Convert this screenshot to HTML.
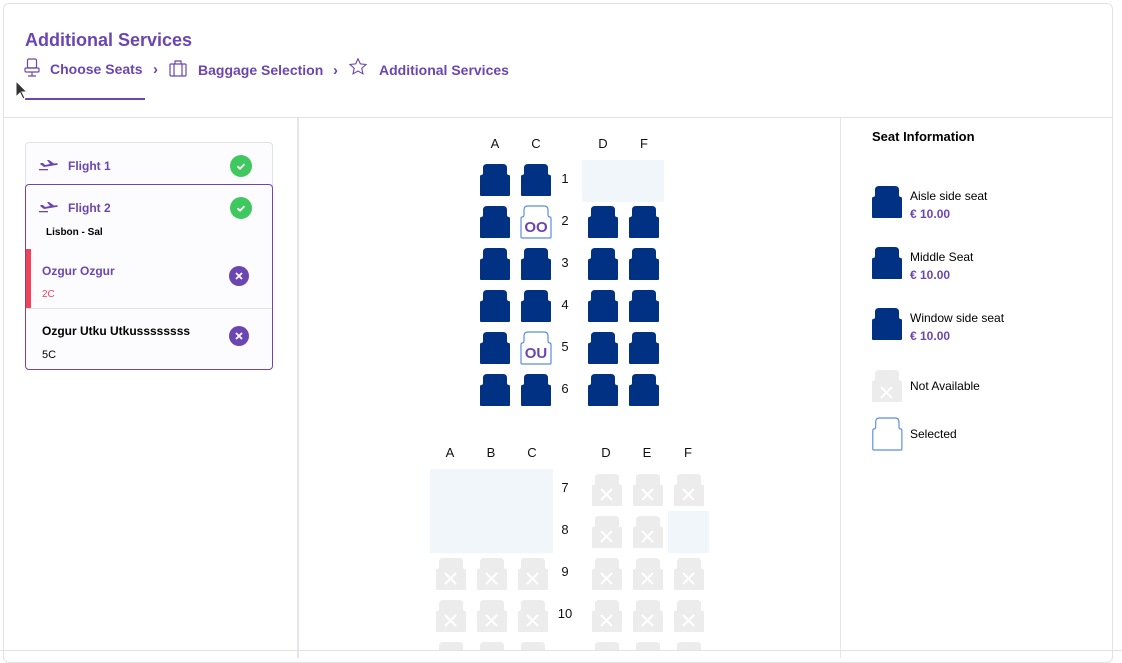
<!DOCTYPE html>
<html><head><meta charset="utf-8"><style>
*{margin:0;padding:0;box-sizing:border-box}
body{width:1122px;height:655px;overflow:hidden;background:#fff;font-family:"Liberation Sans",sans-serif;position:relative}
.card{position:absolute;left:3px;top:3px;width:1110px;height:660px;border:1px solid #dfe3e8;border-radius:6px;background:#fff}
.abs{position:absolute}
.p{color:#6b46b0;font-weight:bold}
</style></head><body>
<div class="card"></div>
<div class="abs p" style="left:25px;top:30px;font-size:18px">Additional Services</div>
<svg class="abs" style="left:24px;top:58px" width="16" height="20" viewBox="0 0 16 20" fill="none" stroke="#6b46b0" stroke-width="1.2"><rect x="3.5" y="1" width="9" height="9" rx="1.5"/><rect x="1" y="10" width="14" height="4" rx="1"/><path d="M8 14v4M4 18h8"/></svg>
<div class="abs p" style="left:50px;top:61px;font-size:14px">Choose Seats</div>
<div class="abs p" style="left:153px;top:61px;font-size:15px">›</div>
<svg class="abs" style="left:169px;top:60px" width="18" height="17" viewBox="0 0 18 17" fill="none" stroke="#6b46b0" stroke-width="1.2"><rect x="1" y="4" width="16" height="12" rx="1"/><path d="M6 4V1h6v3M5 4v12M13 4v12"/></svg>
<div class="abs p" style="left:198px;top:62px;font-size:14px">Baggage Selection</div>
<div class="abs p" style="left:333px;top:62px;font-size:15px">›</div>
<svg class="abs" style="left:349px;top:58px" width="18" height="17" viewBox="0 0 24 23" fill="none" stroke="#6b46b0" stroke-width="1.5"><path d="M12 1l3.2 7 7.6.8-5.7 5.1 1.6 7.5L12 17.6 5.3 21.4l1.6-7.5L1.2 8.8 8.8 8z"/></svg>
<div class="abs p" style="left:379px;top:62px;font-size:14px">Additional Services</div>
<div class="abs" style="left:25px;top:98px;width:120px;height:2px;background:#6b46b0"></div>
<svg class="abs" style="left:15px;top:80px" width="14" height="20" viewBox="0 0 14 20"><path d="M1 1v16l4-4 3 6 2-1-3-6h5z" fill="#333" stroke="#fff" stroke-width="1"/></svg>
<div class="abs" style="left:4px;top:117px;width:1108px;height:1px;background:#dfe3e8"></div>
<div class="abs" style="left:297px;top:118px;width:2px;height:540px;background:#e3e6ea"></div>
<div class="abs" style="left:840px;top:118px;width:1px;height:540px;background:#e3e6ea"></div>

<div class="abs" style="left:25px;top:142px;width:248px;height:50px;border:1px solid #dfe3e8;border-radius:4px;background:#fcfcfe"></div>
<div class="abs" style="left:25px;top:184px;width:248px;height:186px;border:1px solid #6b46b0;border-radius:4px;background:#fcfcfe;overflow:hidden">
 <div class="abs" style="left:0;top:64px;width:5px;height:60px;background:#f0435a"></div>
 <div class="abs" style="left:0;top:123px;width:248px;height:1px;background:#dfe3e8"></div>
</div>
<svg class="abs" style="left:39px;top:159px" width="20" height="12" viewBox="0 0 20 12" fill="#6b46b0"><path d="M2 4l2 0 2 2 5-1-3-4h2l5 3.5 3-.2c1 0 1 1.4 0 1.6L5 8 1 5z"/><rect x="0" y="10" width="9" height="1.3"/></svg>
<div class="abs p" style="left:68px;top:159px;font-size:12px">Flight 1</div>
<svg class="abs" style="left:230px;top:155px" width="22" height="22"><circle cx="11" cy="11" r="11" fill="#3ec85f"/><path d="M7.5 11.3l2.5 2.4 4.5-4.6" stroke="#fff" stroke-width="1.8" fill="none"/></svg>
<svg class="abs" style="left:39px;top:201px" width="20" height="12" viewBox="0 0 20 12" fill="#6b46b0"><path d="M2 4l2 0 2 2 5-1-3-4h2l5 3.5 3-.2c1 0 1 1.4 0 1.6L5 8 1 5z"/><rect x="0" y="10" width="9" height="1.3"/></svg>
<div class="abs p" style="left:68px;top:201px;font-size:12px">Flight 2</div>
<svg class="abs" style="left:230px;top:197px" width="22" height="22"><circle cx="11" cy="11" r="11" fill="#3ec85f"/><path d="M7.5 11.3l2.5 2.4 4.5-4.6" stroke="#fff" stroke-width="1.8" fill="none"/></svg>
<div class="abs" style="left:46px;top:227px;font-size:10px;font-weight:bold;color:#000">Lisbon - Sal</div>
<div class="abs p" style="left:42px;top:264px;font-size:12px">Ozgur Ozgur</div>
<div class="abs" style="left:42px;top:289px;font-size:10px;color:#f0435a">2C</div>
<svg class="abs" style="left:229px;top:266px" width="20" height="20"><circle cx="10" cy="10" r="10" fill="#6b46b0"/><path d="M7 7l6 6M13 7l-6 6" stroke="#fff" stroke-width="1.8"/></svg>
<div class="abs" style="left:42px;top:324px;font-size:12px;font-weight:bold;color:#000">Ozgur Utku Utkussssssss</div>
<div class="abs" style="left:42px;top:349px;font-size:11px;color:#000">5C</div>
<svg class="abs" style="left:229px;top:326px" width="20" height="20"><circle cx="10" cy="10" r="10" fill="#6b46b0"/><path d="M7 7l6 6M13 7l-6 6" stroke="#fff" stroke-width="1.8"/></svg>

<svg class="abs" style="left:300px;top:120px" width="530" height="531" viewBox="300 120 530 531">
<defs>
<path id="s" d="M7 0H23Q27 0 27 4V9Q27 11 29 11Q30 11 30 13V31Q30 32 29 32H1Q0 32 0 31V13Q0 11 1 11Q3 11 3 9V4Q3 0 7 0Z"/>
<g id="d"><use href="#s" fill="#013183"/></g>
<g id="n"><use href="#s" fill="#ececec"/><path d="M9 15l11 11M20 15l-11 11" stroke="#fff" stroke-width="2"/></g>
<g id="sel"><use href="#s" fill="#fff" stroke="#5b8ee0" stroke-width="1.2"/></g>
</defs>
<rect x="582" y="160" width="82" height="42" fill="#f1f6fb"/>
<rect x="430" y="469" width="123" height="84" fill="#f1f6fb"/>
<rect x="668" y="511" width="41" height="42" fill="#f1f6fb"/>
<g font-family="Liberation Sans" font-size="13" fill="#111" text-anchor="middle">
<text x="495" y="148">A</text><text x="536" y="148">C</text><text x="603" y="148">D</text><text x="644" y="148">F</text>
<text x="565" y="183">1</text><text x="565" y="225">2</text><text x="565" y="267">3</text><text x="565" y="309">4</text><text x="565" y="351">5</text><text x="565" y="393">6</text>
<text x="450" y="457">A</text><text x="491" y="457">B</text><text x="532" y="457">C</text><text x="606" y="457">D</text><text x="647" y="457">E</text><text x="688" y="457">F</text>
<text x="565" y="492">7</text><text x="565" y="534">8</text><text x="565" y="576">9</text><text x="565" y="618">10</text>
</g>
<use href="#d" x="480" y="164"/><use href="#d" x="521" y="164"/>
<use href="#d" x="480" y="206"/><use href="#sel" x="521" y="206"/><use href="#d" x="588" y="206"/><use href="#d" x="629" y="206"/>
<use href="#d" x="480" y="248"/><use href="#d" x="521" y="248"/><use href="#d" x="588" y="248"/><use href="#d" x="629" y="248"/>
<use href="#d" x="480" y="290"/><use href="#d" x="521" y="290"/><use href="#d" x="588" y="290"/><use href="#d" x="629" y="290"/>
<use href="#d" x="480" y="332"/><use href="#sel" x="521" y="332"/><use href="#d" x="588" y="332"/><use href="#d" x="629" y="332"/>
<use href="#d" x="480" y="374"/><use href="#d" x="521" y="374"/><use href="#d" x="588" y="374"/><use href="#d" x="629" y="374"/>
<g font-family="Liberation Sans" font-size="15" font-weight="bold" fill="#6b46b0" text-anchor="middle">
<text x="536" y="232">OO</text><text x="536" y="358">OU</text></g>
<use href="#n" x="592" y="474"/><use href="#n" x="633" y="474"/><use href="#n" x="674" y="474"/>
<use href="#n" x="592" y="516"/><use href="#n" x="633" y="516"/>
<g id="row"><use href="#n" x="436" y="558"/><use href="#n" x="477" y="558"/><use href="#n" x="518" y="558"/><use href="#n" x="592" y="558"/><use href="#n" x="633" y="558"/><use href="#n" x="674" y="558"/></g>
<use href="#row" y="42"/><use href="#row" y="84"/>
</svg>

<svg class="abs" style="left:872px;top:186px" width="31" height="266" viewBox="0 0 31 266">
<defs><path id="s2" d="M7 0H23Q27 0 27 4V9Q27 11 29 11Q30 11 30 13V31Q30 32 29 32H1Q0 32 0 31V13Q0 11 1 11Q3 11 3 9V4Q3 0 7 0Z"/></defs>
<use href="#s2" fill="#013183"/><use href="#s2" y="61" fill="#013183"/><use href="#s2" y="122" fill="#013183"/>
<use href="#s2" y="184" fill="#ececec"/><path d="M9 201l11 11M20 201l-11 11" stroke="#fff" stroke-width="2"/>
<use href="#s2" x="0.5" y="232" fill="#fff" stroke="#5b8ee0" stroke-width="1.2" transform="translate(0.3 0) scale(0.97 1)"/>
</svg>
<div class="abs" style="left:872px;top:129px;font-size:13px;font-weight:bold;color:#000;z-index:5">Seat Information</div>
<div class="abs" style="left:910px;top:189px;font-size:12px;color:#000">Aisle side seat</div>
<div class="abs p" style="left:910px;top:207px;font-size:12px">€ 10.00</div>
<div class="abs" style="left:910px;top:250px;font-size:12px;color:#000">Middle Seat</div>
<div class="abs p" style="left:910px;top:268px;font-size:12px">€ 10.00</div>
<div class="abs" style="left:910px;top:311px;font-size:12px;color:#000">Window side seat</div>
<div class="abs p" style="left:910px;top:329px;font-size:12px">€ 10.00</div>
<div class="abs" style="left:910px;top:379px;font-size:12px;color:#000">Not Available</div>
<div class="abs" style="left:910px;top:427px;font-size:12px;color:#000">Selected</div>
<div class="abs" style="left:0;top:650px;width:1122px;height:1px;background:#dfe3e8"></div>
</body></html>
